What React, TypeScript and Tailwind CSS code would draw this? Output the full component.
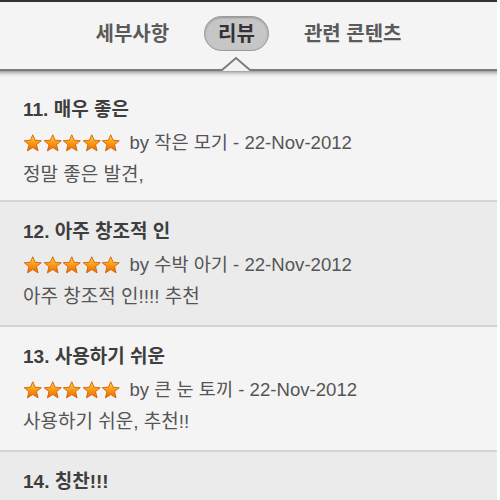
import { useId } from 'react';

const reviews = [
  { no: 11, title: '매우 좋은', author: '작은 모기', date: '22-Nov-2012', body: '정말 좋은 발견,' },
  { no: 12, title: '아주 창조적 인', author: '수박 아기', date: '22-Nov-2012', body: '아주 창조적 인!!!! 추천' },
  { no: 13, title: '사용하기 쉬운', author: '큰 눈 토끼', date: '22-Nov-2012', body: '사용하기 쉬운, 추천!!' },
  { no: 14, title: '칭찬!!!', author: '', date: '22-Nov-2012', body: '' },
];

function Star() {
  const id = useId();
  return (
    <svg width="19.5" height="18" viewBox="0 0 20 19" className="block">
      <defs>
        <linearGradient id={id} x1="0" y1="0" x2="0" y2="1">
          <stop offset="0" stopColor="#ffd84a" />
          <stop offset="0.5" stopColor="#fb9a16" />
          <stop offset="1" stopColor="#ee6a00" />
        </linearGradient>
      </defs>
      <path
        d="M10 0.8 L12.5 6.6 L19 7.1 L14 11.2 L15.6 17.8 L10 14.3 L4.4 17.8 L6 11.2 L1 7.1 L7.5 6.6 Z"
        fill={`url(#${id})`}
        stroke="#cc5d00"
        strokeWidth="0.9"
        strokeLinejoin="round"
      />
    </svg>
  );
}

function Header() {
  return (
    <div className="relative h-[69px] border-t-2 border-[#333] bg-[#f4f4f4]">
      <div className="flex h-[63px] items-center justify-center gap-[35px]">
        <span className="text-[20px] font-bold text-[#5a5a5a]">세부사항</span>
        <span className="flex h-[35px] items-center rounded-full border border-[#9a9a9a] bg-[#c6c6c6] px-[13px] text-[20px] font-bold text-[#333] shadow-[inset_0_1px_2px_rgba(0,0,0,0.25)]">
          리뷰
        </span>
        <span className="text-[20px] font-bold text-[#5a5a5a]">관련 콘텐츠</span>
      </div>
      <svg className="absolute left-0 top-[50px] z-10" width="497" height="28" viewBox="0 0 497 28">
        <defs>
          <linearGradient id="hdrshadow" x1="0" y1="0" x2="0" y2="1">
            <stop offset="0" stopColor="#9c9c9c" />
            <stop offset="1" stopColor="#f4f4f4" stopOpacity="0" />
          </linearGradient>
        </defs>
        <rect x="0" y="19" width="497" height="7" fill="url(#hdrshadow)" />
        <path d="M223 19 L236 7.5 L249 19 Z" fill="#f2f2f2" />
        <path d="M0 18 L222 18 L236 6 L250 18 L497 18" fill="none" stroke="#7c7c7c" strokeWidth="2" />
      </svg>
    </div>
  );
}

export default function App() {
  return (
    <div className='h-[500px] w-[500px] overflow-hidden bg-white [font-family:"Liberation_Sans","Noto_Sans_CJK_KR",sans-serif]'>
      <div className="w-[497px]">
        <Header />
        {reviews.map((r, i) => (
          <div
            key={r.no}
            className={`${i === 0 ? 'pt-[25px] pb-[10px]' : 'border-t-2 border-[#d4d4d4] pt-[14px] pb-[13px]'} pl-[23px] ${
              i % 2 === 0 ? 'bg-[#f4f4f4]' : 'bg-[#ebebeb]'
            }`}
          >
            <div className="text-[19px] font-bold leading-[32px] text-[#3e3e3e]">
              {r.no}. {r.title}
            </div>
            <div className="mt-[1px] flex h-[32px] items-center text-[18.6px] text-[#555]">
              <div className="flex">
                <Star />
                <Star />
                <Star />
                <Star />
                <Star />
              </div>
              <span className="ml-[9px] leading-[32px]">
                by {r.author} - {r.date}
              </span>
            </div>
            <div className="-mb-[1px] text-[19px] leading-[32px] text-[#555]">{r.body}</div>
          </div>
        ))}
      </div>
    </div>
  );
}
